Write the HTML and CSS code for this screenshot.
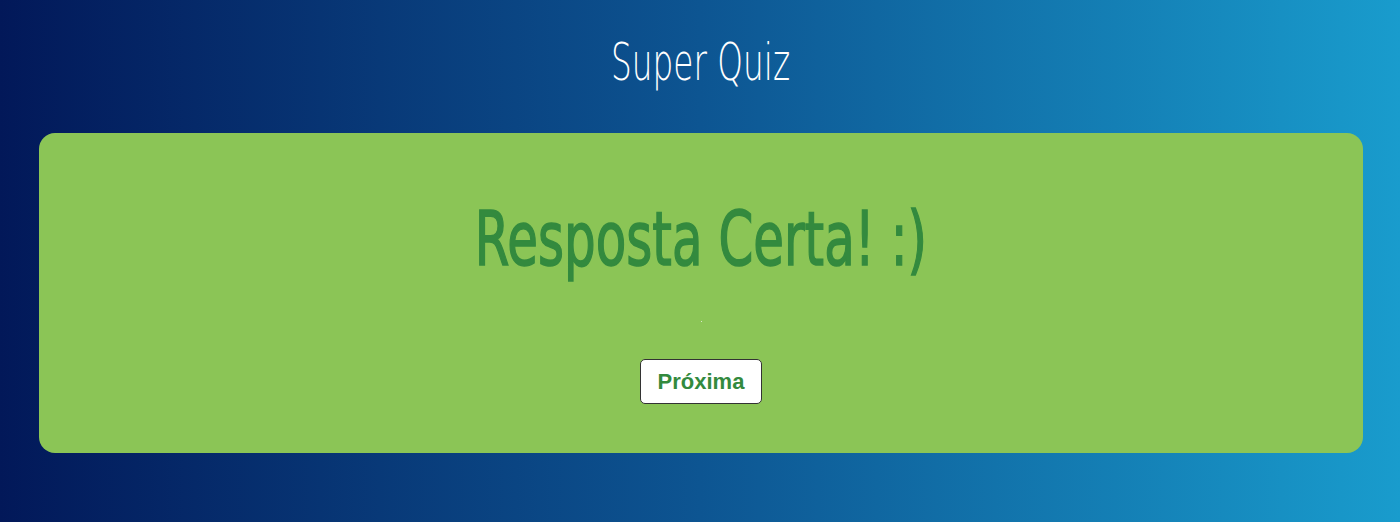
FILE: index.html
```html
<!DOCTYPE html>
<html lang="pt">
<head>
<meta charset="utf-8">
<title>Super Quiz</title>
<link rel="stylesheet" href="styles.css">
</head>
<body>
<main class="app">
  <h1 class="app-title"><span class="condensed">Super Quiz</span></h1>
  <section class="result-card">
    <h2 class="result-text"><span class="condensed">Resposta Certa! :)</span></h2>
    <span class="result-dot"></span>
    <button class="next-btn" type="button">Próxima</button>
  </section>
</main>
</body>
</html>
```

FILE: styles.css
```css
html, body {
  margin: 0;
  padding: 0;
  height: 100%;
}
body {
  background: linear-gradient(to right, #021859 0%, #0d5592 50%, #199ccd 100%);
  font-family: "Liberation Sans", Arial, sans-serif;
  overflow: hidden;
}
.app {
  display: flex;
  flex-direction: column;
  align-items: stretch;
  padding: 0 37px 0 39px;
}
.condensed {
  display: inline-block;
  white-space: nowrap;
}
.app-title {
  margin: 0;
  height: 133px;
  display: flex;
  align-items: center;
  justify-content: center;
  font-family: "DejaVu Sans", sans-serif;
  font-weight: 200;
  font-size: 51px;
  color: #ffffff;
  line-height: 1;
  padding-bottom: 9px;
  box-sizing: border-box;
}
.app-title .condensed {
  transform: scaleX(0.642);
}
.result-card {
  background: #8bc556;
  border-radius: 16px;
  height: 320px;
  display: flex;
  flex-direction: column;
  align-items: center;
}
.result-text {
  margin: 0;
  margin-top: 56px;
  height: 100px;
  display: flex;
  align-items: center;
  justify-content: center;
  font-family: "DejaVu Sans", sans-serif;
  font-weight: 400;
  font-size: 74px;
  color: #338a3e;
  line-height: 1;
}
.result-text .condensed {
  transform: scaleX(0.675);
  -webkit-text-stroke: 1.6px #338a3e;
}
.result-dot {
  width: 1px;
  height: 1px;
  background: #d8e8cc;
  margin-top: 32px;
  margin-left: 1px;
}
.next-btn {
  margin-top: 37px;
  width: 122px;
  height: 45px;
  background: #ffffff;
  border: 1px solid #333333;
  border-radius: 5px;
  font-family: "Liberation Sans", Arial, sans-serif;
  font-weight: 700;
  font-size: 22px;
  color: #338a3e;
  padding: 0;
  cursor: pointer;
}
```
